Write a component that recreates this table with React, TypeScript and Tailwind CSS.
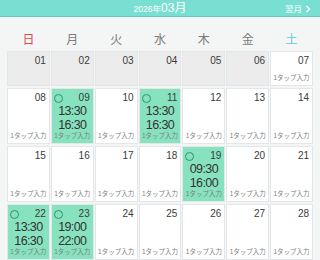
import React from "react";

type Day = {
  d: string;
  past?: boolean;
  times?: [string, string];
  tap?: boolean;
};

const weeks: Day[][] = [
  [
    { d: "01", past: true },
    { d: "02", past: true },
    { d: "03", past: true },
    { d: "04", past: true },
    { d: "05", past: true },
    { d: "06", past: true },
    { d: "07", tap: true },
  ],
  [
    { d: "08", tap: true },
    { d: "09", tap: true, times: ["13:30", "16:30"] },
    { d: "10", tap: true },
    { d: "11", tap: true, times: ["13:30", "16:30"] },
    { d: "12", tap: true },
    { d: "13", tap: true },
    { d: "14", tap: true },
  ],
  [
    { d: "15", tap: true },
    { d: "16", tap: true },
    { d: "17", tap: true },
    { d: "18", tap: true },
    { d: "19", tap: true, times: ["09:30", "16:00"] },
    { d: "20", tap: true },
    { d: "21", tap: true },
  ],
  [
    { d: "22", tap: true, times: ["13:30", "16:30"] },
    { d: "23", tap: true, times: ["19:00", "22:00"] },
    { d: "24", tap: true },
    { d: "25", tap: true },
    { d: "26", tap: true },
    { d: "27", tap: true },
    { d: "28", tap: true },
  ],
];

const weekdays = [
  { t: "日", c: "text-[#e8474a]" },
  { t: "月", c: "text-[#7a7a7a]" },
  { t: "火", c: "text-[#7a7a7a]" },
  { t: "水", c: "text-[#7a7a7a]" },
  { t: "木", c: "text-[#7a7a7a]" },
  { t: "金", c: "text-[#7a7a7a]" },
  { t: "土", c: "text-[#62c6e6]" },
];

function Cell({ day, short }: { day: Day; short: boolean }) {
  const bg = day.past ? "bg-[#ececec]" : day.times ? "bg-[#87e2c0]" : "bg-white";
  return (
    <div
      className={`${bg} ${short ? "h-[35px]" : "h-[56px]"} border border-[#e4e7ea] flex flex-col`}
    >
      <div className="flex items-center justify-between pl-[2px] pr-[3px] pt-[2px]">
        {day.times ? (
          <span className="w-[9px] h-[9px] rounded-full border-[1.6px] border-[#2a9673]" />
        ) : (
          <span />
        )}
        <span className="text-[10px] leading-[14px] text-[#3a3a3a]">{day.d}</span>
      </div>
      {day.times && (
        <div className="flex flex-col items-center text-[12.5px] leading-[13.5px] tracking-[-0.6px] text-[#333]">
          <span>{day.times[0]}</span>
          <span>{day.times[1]}</span>
        </div>
      )}
      {day.tap && (
        <div className="mt-auto pb-[3px] text-center text-[6.5px] leading-[8px] text-[#7c7c7c]">
          1タップ入力
        </div>
      )}
    </div>
  );
}

export default function App() {
  return (
    <div
      className="w-[320px] h-[260px] overflow-hidden bg-[#f4f6f6]"
      style={{ fontFamily: '"Liberation Sans", "Noto Sans CJK JP", sans-serif' }}
    >
      <div className="h-[17px] bg-[#7adfd3] border-b border-[#63cbbf] grid grid-cols-[1fr_auto_1fr] items-center text-white">
        <span />
        <div className="flex items-baseline">
          <span className="text-[8.5px] leading-[16px]">2026年</span>
          <span className="text-[12px] leading-[16px]">03月</span>
        </div>
        <div className="flex items-center justify-end pr-[9px] gap-[3px]">
          <span className="text-[8.5px] leading-[16px]">翌月</span>
          <svg width="6" height="8" viewBox="0 0 6 8">
            <path d="M1.5 1 L4.5 4 L1.5 7" stroke="white" strokeWidth="1.4" fill="none" />
          </svg>
        </div>
      </div>
      <div className="grid grid-cols-7 gap-x-[1px] px-[7px] h-[34px] items-end pb-[4px]">
        {weekdays.map((w) => (
          <div key={w.t} className={`text-center text-[12px] leading-[14px] ${w.c}`}>
            {w.t}
          </div>
        ))}
      </div>
      <div className="flex flex-col gap-y-[2px] px-[7px]">
        {weeks.map((wk, i) => (
          <div key={i} className="grid grid-cols-7 gap-x-[1px]">
            {wk.map((d) => (
              <Cell key={d.d} day={d} short={i === 0} />
            ))}
          </div>
        ))}
      </div>
    </div>
  );
}
